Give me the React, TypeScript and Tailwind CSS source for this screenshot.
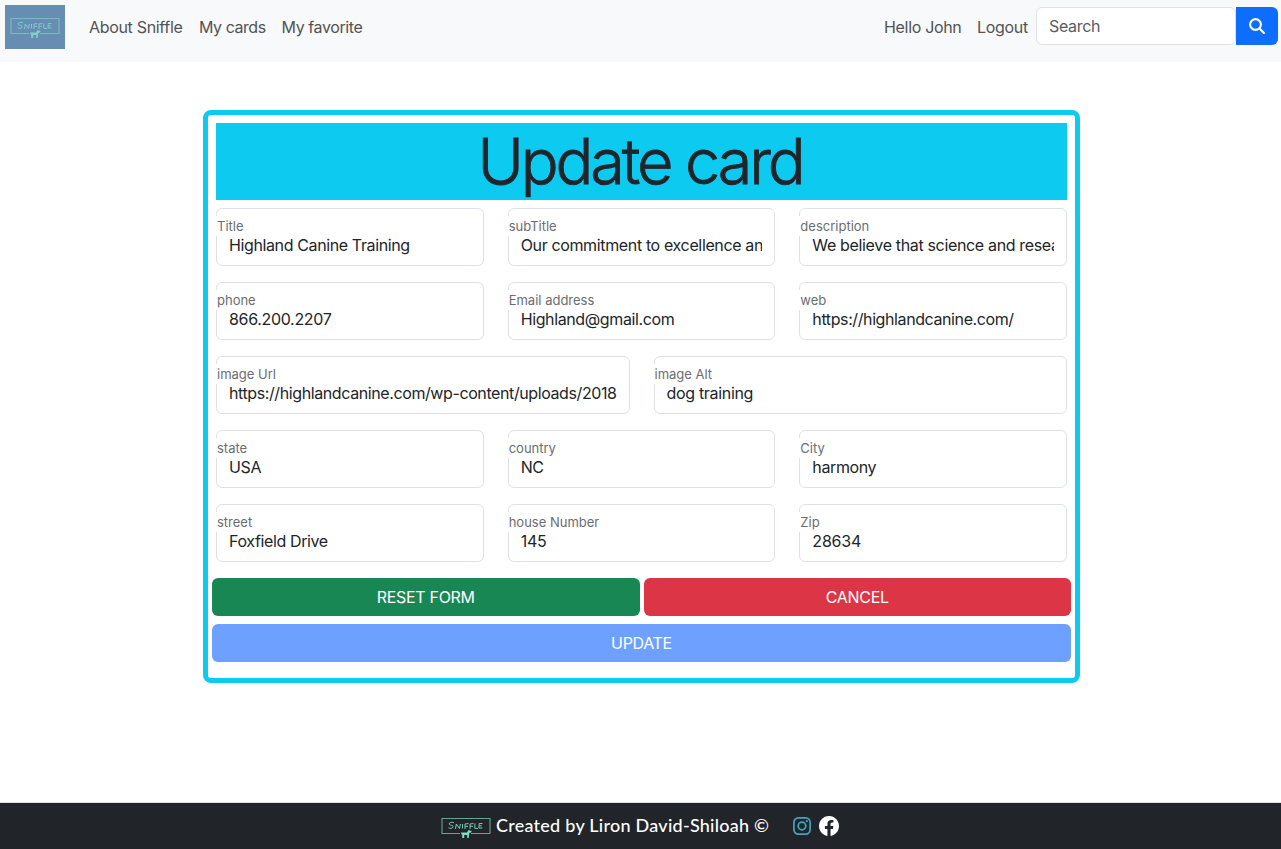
type FieldProps = { label: string; value: string; tracking?: string };

function Field({ label, value, tracking = "tracking-[-0.38px]" }: FieldProps) {
  return (
    <label className="relative block h-[58px] min-w-0 flex-1">
      <input
        readOnly
        value={value}
        className={`h-full w-full rounded-md border border-[#dee2e6] bg-white px-3 pt-[26px] pb-[10px] text-base leading-6 text-[#212529] outline-none ${tracking}`}
      />
      <span className="absolute top-2 left-0 h-5 bg-white pl-px text-[13px] leading-[21px] tracking-normal whitespace-nowrap text-[#6b6d70]">
        {label}
      </span>
    </label>
  );
}

function SniffleLogo({ className }: { className: string }) {
  return (
    <svg viewBox="0 0 50 22" className={className} fill="none" stroke="currentColor">
      <path d="M19 16.500H1V1.500h48v15H30" strokeWidth="1.100" opacity=".7" />
      <path
        d="M13 5.800c-2-1.300-6 .2-4.500 1.700 1.500 1.100 4.400.9 3.400 2.700-.9 1.500-3.200 1.400-4.400.5M14.500 12l.8-5 3.200 4.600.8-4.600M21.500 7v4.500M24 12V7l3.500-.5M24 9.300h3M29 12V7l3.500-.5M29 9.300h3M34 6.500l-.3 4.800 3.300.2M41.500 6.500h-3.300l-.3 4.500h3.500M38.300 8.800h2.500"
        strokeWidth=".9"
      />
      <path d="M20 15.500h6l1.500-2.500 3 1v1.300l-2.200.6-.6 5h-1.500v-3h-3v3h-2v-3l-.8-1z" fill="currentColor" stroke="none" />
    </svg>
  );
}

const rows: FieldProps[][] = [
  [
    { label: "Title", value: "Highland Canine Training" },
    { label: "subTitle", value: "Our commitment to excellence and innovation", tracking: "tracking-[-0.36px]" },
    { label: "description", value: "We believe that science and research", tracking: "tracking-[-0.34px]" },
  ],
  [
    { label: "phone", value: "866.200.2207", tracking: "tracking-[-0.32px]" },
    { label: "Email address", value: "Highland@gmail.com" },
    { label: "web", value: "https://highlandcanine.com/", tracking: "tracking-[-0.4px]" },
  ],
  [
    { label: "image Url", value: "https://highlandcanine.com/wp-content/uploads/2018", tracking: "tracking-[-0.4px]" },
    { label: "image Alt", value: "dog training", tracking: "tracking-[-0.32px]" },
  ],
  [
    { label: "state", value: "USA" },
    { label: "country", value: "NC" },
    { label: "City", value: "harmony" },
  ],
  [
    { label: "street", value: "Foxfield Drive" },
    { label: "house Number", value: "145", tracking: "tracking-[-0.2px]" },
    { label: "Zip", value: "28634", tracking: "tracking-[-0.2px]" },
  ],
];

export default function App() {
  return (
    <div className="flex h-[849px] w-full flex-col overflow-hidden bg-white font-['Inter',sans-serif] text-base leading-6 tracking-[-0.32px] text-[#212529]">
      <header className="flex h-[62px] shrink-0 items-start bg-[#f8f9fa] pr-[3px] pl-[5px] text-[#525354]">
        <div className="mt-[5px] flex h-11 w-[60px] items-center justify-center bg-[#688db3] text-[#7fd0c8]">
          <SniffleLogo className="mt-px h-[22px] w-[50px]" />
        </div>
        <nav className="mt-[15px] ml-6 flex gap-4 whitespace-nowrap">
          <a className="w-[94px]">About Sniffle</a>
          <a className="w-[66.5px] tracking-[-0.45px]">My cards</a>
          <a className="tracking-[-0.4px]">My favorite</a>
        </nav>
        <div className="mt-[15px] ml-auto flex gap-4 whitespace-nowrap">
          <a className="w-[77px]">Hello John</a>
          <a className="w-[51px]">Logout</a>
        </div>
        <div className="mt-[7px] ml-2 flex h-[38px]">
          <input
            placeholder="Search"
            className="w-[200px] rounded-md border border-[#dee2e6] bg-white px-3 pb-px outline-none placeholder:text-[#595c5f]"
          />
          <button aria-label="Search" className="flex w-[42px] items-center justify-center rounded-r-md bg-[#0d6efd] text-white">
            <svg viewBox="0 0 16 16" className="h-4 w-4" fill="none" stroke="currentColor" strokeWidth="2.100" strokeLinecap="round">
              <circle cx="6.500" cy="6.500" r="5.400" />
              <path d="m10.700 10.700 4.200 4.200" />
            </svg>
          </button>
        </div>
      </header>

      <main className="flex flex-1 items-start pt-12 pl-[203px]">
        <form className="h-[573px] w-[877px] rounded-lg border-[5px] border-[#0dcaf0] px-1 pt-2">
          <h1 className="mx-1 flex h-[77px] items-center justify-center bg-[#0dcaf0] pr-[3px] text-[63px] leading-[77px] font-light tracking-[-3.1px] [-webkit-text-stroke:0.8px_#212529]">
            Update card
          </h1>
          <div className="mx-1 mt-2 flex flex-col gap-4">
            {rows.map((row) => (
              <div key={row[0].label} className="flex gap-6">
                {row.map((field) => (
                  <Field key={field.label} {...field} />
                ))}
              </div>
            ))}
          </div>
          <div className="mt-4 flex gap-1 text-white">
            <button type="button" className="h-[38px] flex-1 rounded-md bg-[#198754]">RESET FORM</button>
            <button type="button" className="h-[38px] flex-1 rounded-md bg-[#dc3545]">CANCEL</button>
          </div>
          <button type="button" className="mt-2 h-[38px] w-full rounded-md bg-[#6ea1ff] text-white">UPDATE</button>
        </form>
      </main>

      <footer className="flex h-[47px] shrink-0 items-center border-t border-[#dee2e6] bg-[#212529] pl-[441px] text-white">
        <SniffleLogo className="mt-[3px] h-[22px] w-[50px] text-[#7ddbc5]" />
        <span className="ml-[5px] w-[273px] pb-[2px] font-['Lato',sans-serif] text-[18px] font-medium tracking-[0.25px] whitespace-nowrap">
          Created by Liron David-Shiloah ©
        </span>
        <svg viewBox="0 0 18 18" className="ml-6 h-[18px] w-[18px] text-[#3fa6bb]" fill="none" stroke="currentColor" strokeWidth="1.700">
          <rect x=".9" y=".9" width="16.200" height="16.200" rx="4.500" />
          <circle cx="9" cy="9" r="3.800" />
          <circle cx="13.800" cy="4.200" r="1.100" fill="currentColor" stroke="none" />
        </svg>
        <svg viewBox="0 0 16 16" className="ml-2 h-5 w-5" fill="currentColor">
          <path d="M16 8.049c0-4.446-3.582-8.050-8-8.050C3.580 0-.002 3.603-.002 8.050c0 4.017 2.926 7.347 6.750 7.951v-5.625h-2.030V8.050H6.750V6.275c0-2.017 1.195-3.131 3.022-3.131.876 0 1.791.157 1.791.157v1.980h-1.009c-.993 0-1.303.621-1.303 1.258v1.510h2.218l-.354 2.326H9.250V16c3.824-.604 6.750-3.934 6.750-7.951z" />
        </svg>
      </footer>
    </div>
  );
}
